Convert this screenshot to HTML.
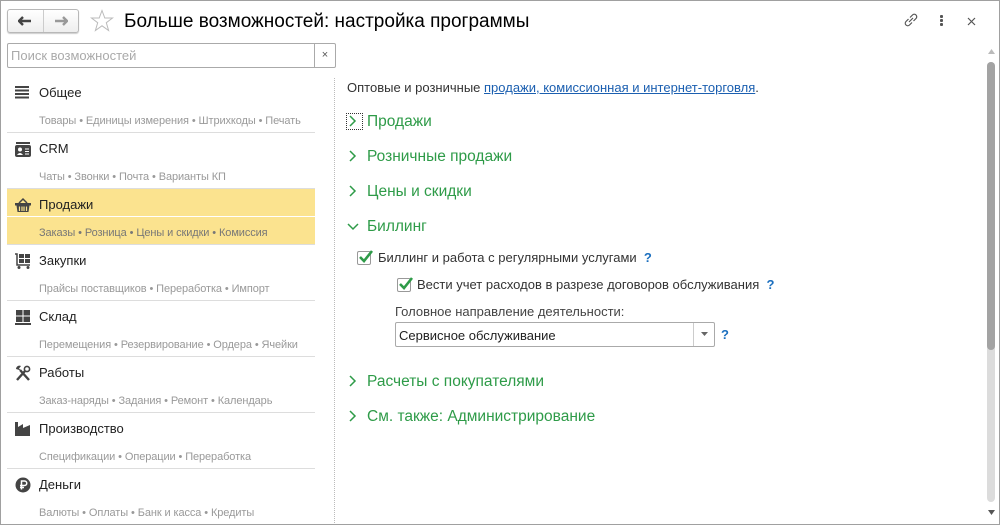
<!DOCTYPE html>
<html><head><meta charset="utf-8"><style>
*{box-sizing:border-box;margin:0;padding:0}
body{width:1000px;height:525px;background:#fff;font-family:"Liberation Sans",Arial,sans-serif;position:relative;overflow:hidden;color:#333}
.win{position:absolute;left:0;top:0;width:1000px;height:525px}
.bd{position:absolute;left:0;top:0;width:1000px;height:525px;border:1px solid #a0a0a0;pointer-events:none}
.a{position:absolute}
.nav{left:7px;top:9px;width:72px;height:24px;border:1px solid #b8b8b8;border-radius:3px;background:linear-gradient(#fff,#eee);box-shadow:0 1px 1px #ccc}
.nav:after{content:"";position:absolute;left:35px;top:0;width:1px;height:22px;background:#ccc}
.title{left:124px;top:11px;font-size:19px;color:#000}
.search{left:7px;top:43px;width:329px;height:25px;border:1px solid #aaa;border-radius:2px;font-size:13px;color:#aaa;padding:4px 0 0 3px}
.search span{position:absolute;right:0;top:0;width:21px;height:23px;border-left:1px solid #aaa;color:#555;font-size:11px;text-align:center;line-height:22px}
.row{position:absolute;left:7px;width:308px;height:56px;border-bottom:1px solid #ddd}
.row.sel{background:#fbe38f}
.row.sel:after{content:"";position:absolute;left:0;right:0;top:27px;height:1px;background:#fff}
.row b{position:absolute;left:32px;top:8px;font-weight:normal;font-size:13px;color:#222}
.row i{position:absolute;left:32px;top:38px;font-style:normal;font-size:11px;color:#999;letter-spacing:-0.1px}
.row.sel i{color:#777}
.row svg{position:absolute;left:8px;top:8px}
.dots{left:334px;top:78px;height:447px;border-left:1px dotted #bbb}
.green{font-size:15.5px;color:#2e9b48}
.chev{position:absolute;left:-19px;top:1px}
.cb{position:absolute;width:14px;height:14px;border:1px solid #999;border-radius:2px;background:#fff}
.q{color:#1b6fbf;font-weight:bold;font-size:13px}
</style></head><body><div class="win">
<div class="a nav"><svg class="a" style="left:10px;top:6px" width="14" height="10"><path d="M1 5H13M5 1L1 5L5 9" stroke="#444" stroke-width="2.4" fill="none"/></svg><svg class="a" style="left:46px;top:6px" width="14" height="10"><path d="M1 5H13M9 1L13 5L9 9" stroke="#999" stroke-width="2.4" fill="none"/></svg></div>
<svg class="a" style="left:90px;top:9px" width="24" height="24"><path d="M12 1.5L14.8 9H22.5L16.3 13.7L18.6 21.5L12 16.8L5.4 21.5L7.7 13.7L1.5 9H9.2Z" fill="none" stroke="#bbb" stroke-width="1"/></svg>
<div class="a title">Больше возможностей: настройка программы</div>
<svg class="a" style="left:903px;top:12px" width="16" height="16"><path d="M7 5.5L9.5 3A2.3 2.3 0 0 1 13 6.5L10.5 9M9 10.5L6.5 13A2.3 2.3 0 0 1 3 9.5L5.5 7M6 10L10 6" stroke="#555" stroke-width="1.2" fill="none"/></svg>
<div class="a" style="left:940px;top:15px;width:3px;height:3px;background:#555;box-shadow:0 4px #555,0 8px #555;border-radius:1px"></div>
<svg class="a" style="left:967px;top:17px" width="9" height="9"><path d="M1 1L8 8M8 1L1 8" stroke="#555" stroke-width="1.2"/></svg>
<div class="a search">Поиск возможностей<span>×</span></div>

<div class="row" style="top:77px"><svg width="14" height="14"><path d="M0 2H14M0 5.5H14M0 9H14M0 12.5H14" stroke="#444" stroke-width="2"/></svg><b>Общее</b><i>Товары • Единицы измерения • Штрихкоды • Печать</i></div>
<div class="row" style="top:133px"><svg width="16" height="16"><rect x="1" y="1" width="14" height="2" fill="#444"/><rect x="0" y="4" width="16" height="12" rx="2" fill="#444"/><circle cx="5" cy="8.5" r="2" fill="#fff"/><path d="M2 14Q5 10 8 14Z" fill="#fff"/><path d="M10 8H14M10 10.5H14M10 13H14" stroke="#fff"/></svg><b>CRM</b><i>Чаты • Звонки • Почта • Варианты КП</i></div>
<div class="row sel" style="top:189px"><svg width="16" height="16"><path d="M4 6L8 2L12 6" stroke="#444" stroke-width="1.5" fill="none"/><rect x="0" y="6" width="16" height="2.5" fill="#444"/><path d="M1.5 8.5H14.5L13.5 15H2.5Z" fill="#444"/><path d="M4.5 9.5V14M7 9.5V14M9 9.5V14M11.5 9.5V14" stroke="#fbe38f" stroke-width="1.2"/></svg><b>Продажи</b><i>Заказы • Розница • Цены и скидки • Комиссия</i></div>
<div class="row" style="top:245px"><svg width="16" height="16"><path d="M0 1H2V12H15" stroke="#444" stroke-width="1.5" fill="none"/><rect x="4" y="1" width="5" height="4" fill="#444"/><rect x="10" y="1" width="5" height="4" fill="#444"/><rect x="4" y="6" width="5" height="4" fill="#444"/><rect x="10" y="6" width="5" height="4" fill="#444"/><circle cx="4" cy="14.5" r="1.5" fill="#444"/><circle cx="13" cy="14.5" r="1.5" fill="#444"/></svg><b>Закупки</b><i>Прайсы поставщиков • Переработка • Импорт</i></div>
<div class="row" style="top:301px"><svg width="16" height="16"><rect x="1" y="1" width="6.5" height="5.5" fill="#444"/><rect x="8.5" y="1" width="6.5" height="5.5" fill="#444"/><rect x="1" y="7.5" width="6.5" height="5.5" fill="#444"/><rect x="8.5" y="7.5" width="6.5" height="5.5" fill="#444"/><rect x="0" y="14" width="16" height="2" fill="#444"/></svg><b>Склад</b><i>Перемещения • Резервирование • Ордера • Ячейки</i></div>
<div class="row" style="top:357px"><svg width="16" height="16"><path d="M2 15L10 6M14 15L5 5" stroke="#444" stroke-width="2.4"/><path d="M1 4A3.5 3.5 0 0 1 6 1L4 3.5L6 5.5Z" fill="#444"/><circle cx="12" cy="4" r="2.6" fill="none" stroke="#444" stroke-width="1.6"/></svg><b>Работы</b><i>Заказ-наряды • Задания • Ремонт • Календарь</i></div>
<div class="row" style="top:413px"><svg width="16" height="16"><path d="M0 15V1H3V6L8 3V7L15 4V15Z" fill="#444"/></svg><b>Производство</b><i>Спецификации • Операции • Переработка</i></div>
<div class="row" style="top:469px;border:none"><svg width="16" height="16"><circle cx="8" cy="8" r="7.5" fill="#444"/><path d="M6.5 12.5V4H9.5A2 2 0 0 1 9.5 8.5H5M5 10.5H9" stroke="#fff" stroke-width="1.5" fill="none"/></svg><b>Деньги</b><i>Валюты • Оплаты • Банк и касса • Кредиты</i></div>
<div class="a dots"></div>

<div class="a" style="left:347px;top:80px;font-size:13px;color:#333">Оптовые и розничные <span style="color:#1b5fb0;text-decoration:underline">продажи, комиссионная и интернет-торговля</span>.</div>
<div class="a" style="left:346px;top:113px;width:17px;height:17px;border:1px dotted #333"></div>
<div class="a green" style="left:367px;top:113px"><svg class="chev" width="10" height="14"><path d="M2 2L7 7L2 12" stroke="#2e9b48" stroke-width="1.5" fill="none"/></svg>Продажи</div>
<div class="a green" style="left:367px;top:148px"><svg class="chev" width="10" height="14"><path d="M2 2L7 7L2 12" stroke="#2e9b48" stroke-width="1.5" fill="none"/></svg>Розничные продажи</div>
<div class="a green" style="left:367px;top:183px"><svg class="chev" width="10" height="14"><path d="M2 2L7 7L2 12" stroke="#2e9b48" stroke-width="1.5" fill="none"/></svg>Цены и скидки</div>
<div class="a green" style="left:367px;top:218px"><svg class="chev" width="14" height="14" style="left:-21px"><path d="M2 5L7 10L12 5" stroke="#2e9b48" stroke-width="1.5" fill="none"/></svg>Биллинг</div>
<div class="cb" style="left:357px;top:251px"></div><svg class="a" style="left:357px;top:248px" width="18" height="16"><path d="M3 9L7 13L15 3" stroke="#2e9b48" stroke-width="2.6" fill="none"/></svg>
<div class="a" style="left:378px;top:250px;font-size:13px">Биллинг и работа с регулярными услугами &nbsp;<span class="q">?</span></div>
<div class="cb" style="left:397px;top:278px"></div><svg class="a" style="left:397px;top:275px" width="18" height="16"><path d="M3 9L7 13L15 3" stroke="#2e9b48" stroke-width="2.6" fill="none"/></svg>
<div class="a" style="left:417px;top:277px;font-size:13px">Вести учет расходов в разрезе договоров обслуживания &nbsp;<span class="q">?</span></div>
<div class="a" style="left:395px;top:304px;font-size:13px;color:#444">Головное направление деятельности:</div>
<div class="a" style="left:395px;top:322px;width:320px;height:25px;border:1px solid #aaa;border-radius:2px;font-size:13px;padding:5px 0 0 3px;color:#222">Сервисное обслуживание<span style="position:absolute;right:0;top:0;width:21px;height:23px;border-left:1px solid #ccc"><svg style="position:absolute;left:7px;top:9px" width="7" height="4"><path d="M0 0H7L3.5 4Z" fill="#666"/></svg></span></div>
<div class="a q" style="left:721px;top:327px">?</div>
<div class="a green" style="left:367px;top:373px"><svg class="chev" width="10" height="14"><path d="M2 2L7 7L2 12" stroke="#2e9b48" stroke-width="1.5" fill="none"/></svg>Расчеты с покупателями</div>
<div class="a green" style="left:367px;top:408px"><svg class="chev" width="10" height="14"><path d="M2 2L7 7L2 12" stroke="#2e9b48" stroke-width="1.5" fill="none"/></svg>См. также: Администрирование</div>

<svg class="a" style="left:988px;top:49px" width="7" height="5"><path d="M0 5H7L3.5 0Z" fill="#bbb"/></svg>
<div class="a" style="left:987px;top:62px;width:8px;height:440px;background:#dcdcdc;border-radius:4px"></div>
<div class="a" style="left:987px;top:62px;width:8px;height:288px;background:#a3a3a3;border-radius:4px"></div>
<svg class="a" style="left:988px;top:510px" width="7" height="5"><path d="M0 0H7L3.5 5Z" fill="#555"/></svg>
</div><div class="bd"></div></body></html>
